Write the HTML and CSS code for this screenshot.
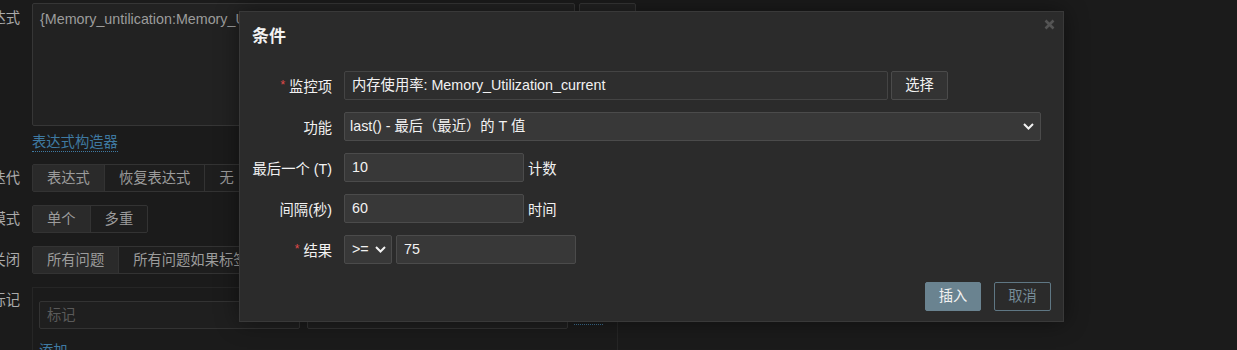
FILE: index.html
```html
<!DOCTYPE html>
<html lang="zh-CN">
<head>
<meta charset="utf-8">
<title>条件</title>
<link rel="stylesheet" href="styles.css">
</head>
<body>
<div class="page">
  <div class="frow">
    <div class="flabel flabel-expr"><span>表达式</span></div>
    <div class="fcontrol">
      <div class="expr-line">
        <div class="textarea">{Memory_untilication:Memory_Utilization_current.last(10,60)}&gt;=75</div>
        <div class="btn-bg">添加</div>
      </div>
      <a class="link link-builder">表达式构造器</a>
    </div>
  </div>
  <div class="frow frow-seg frow-first">
    <div class="flabel flabel-seg"><span>事件成功迭代</span></div>
    <div class="seg"><span class="on">表达式</span><span>恢复表达式</span><span>无</span></div>
  </div>
  <div class="frow frow-seg">
    <div class="flabel flabel-seg"><span>问题事件生成模式</span></div>
    <div class="seg"><span class="on">单个</span><span>多重</span></div>
  </div>
  <div class="frow frow-seg">
    <div class="flabel flabel-seg"><span>事件成功关闭</span></div>
    <div class="seg"><span class="on">所有问题</span><span>所有问题如果标签值匹配</span></div>
  </div>
  <div class="frow frow-seg">
    <div class="flabel flabel-tags"><span>匹配标记</span></div>
    <div class="tags">
      <div class="tag-row">
        <div class="tag-input placeholder">标记</div>
        <div class="tag-input"></div>
        <a class="link link-remove">移除</a>
      </div>
      <a class="link link-add">添加</a>
    </div>
  </div>
</div>

<div class="modal">
  <div class="modal-head">
    <h4 class="modal-title">条件</h4>
    <svg class="close" width="11" height="11" viewBox="0 0 11 11"><path d="M1.5 1.5 L9.5 9.5 M9.5 1.5 L1.5 9.5" stroke="#545454" stroke-width="2.6" fill="none"/></svg>
  </div>
  <div class="mform">
    <div class="mrow">
      <div class="mlabel req">监控项</div>
      <div class="mctrl gap3">
        <div class="minput ro w544">内存使用率: Memory_Utilization_current</div>
        <div class="mbtn">选择</div>
      </div>
    </div>
    <div class="mrow">
      <div class="mlabel">功能</div>
      <div class="mctrl">
        <div class="mselect w697"><span>last() - 最后（最近）的 T 值</span>
          <svg width="11" height="7" viewBox="0 0 11 7"><path d="M1 1 L5.5 5.5 L10 1" stroke="#f2f2f2" stroke-width="2" fill="none"/></svg>
        </div>
      </div>
    </div>
    <div class="mrow">
      <div class="mlabel">最后一个 (T)</div>
      <div class="mctrl gap4">
        <div class="minput w180">10</div>
        <span class="mnote">计数</span>
      </div>
    </div>
    <div class="mrow">
      <div class="mlabel">间隔(秒)</div>
      <div class="mctrl gap4">
        <div class="minput w180">60</div>
        <span class="mnote">时间</span>
      </div>
    </div>
    <div class="mrow">
      <div class="mlabel req">结果</div>
      <div class="mctrl gap4">
        <div class="mselect w48"><span>&gt;=</span>
          <svg width="11" height="7" viewBox="0 0 11 7"><path d="M1 1 L5.5 5.5 L10 1" stroke="#f2f2f2" stroke-width="2" fill="none"/></svg>
        </div>
        <div class="minput w180">75</div>
      </div>
    </div>
  </div>
  <div class="mfoot">
    <div class="fbtn primary">插入</div>
    <div class="fbtn alt">取消</div>
  </div>
</div>
</body>
</html>
```
FILE: styles.css
```css
* { box-sizing: border-box; }
html, body { margin: 0; padding: 0; }
body {
  width: 1237px;
  height: 350px;
  overflow: hidden;
  position: relative;
  background: #1b1b1b;
  font-family: "Liberation Sans", "Noto Sans CJK SC", sans-serif;
  font-size: 14.3px;
  color: #a8a8a8;
}

/* background form */
.page { padding-top: 3px; display: flex; flex-direction: column; }
.frow { display: flex; gap: 12px; align-items: flex-start; }
.frow-seg { margin-top: 13px; }
.frow-first { margin-top: 12px; }
.flabel {
  width: 20px;
  flex: none;
  display: flex;
  justify-content: flex-end;
  white-space: nowrap;
  color: #ababab;
}
.flabel-expr { padding-top: 5px; line-height: 20px; }
.flabel-seg { line-height: 28px; }
.flabel-tags { padding-top: 3px; line-height: 20px; }

.fcontrol { display: flex; flex-direction: column; align-items: flex-start; }
.expr-line { display: flex; gap: 4px; }
.textarea {
  width: 543px;
  height: 123px;
  border: 1px solid #363636;
  border-radius: 2px;
  background: #222222;
  padding: 6px 7px;
  line-height: 18px;
  color: #9c9c9c;
  white-space: nowrap;
  overflow: hidden;
}
.btn-bg {
  width: 57px;
  height: 28px;
  border: 1px solid #363636;
  border-radius: 2px;
  background: #222222;
  color: #9c9c9c;
  text-align: center;
  padding-top: 8px;
  line-height: 18px;
  overflow: hidden;
}
.link {
  display: inline-block;
  color: #3f7aa2;
  line-height: 18px;
  border-bottom: 1px dotted #3f7aa2;
}
.link-builder { margin-top: 7px; }

.seg {
  display: flex;
  height: 28px;
  border: 1px solid #333333;
  border-radius: 2px;
  background: #1e1e1e;
}
.seg span {
  padding: 0 14px;
  line-height: 26px;
  color: #9c9c9c;
  border-left: 1px solid #333333;
  white-space: nowrap;
}
.seg span:first-child { border-left: 0; }
.seg span.on { background: #2a2a2a; }

.tags {
  width: 586px;
  height: 90px;
  border: 1px solid #262626;
  padding: 13px 6px;
  display: flex;
  flex-direction: column;
  align-items: flex-start;
}
.tag-row { display: flex; align-items: center; gap: 7px; }
.tag-input {
  width: 261px;
  height: 28px;
  border: 1px solid #333333;
  border-radius: 2px;
  background: #1f1f1f;
  padding: 0 7px;
  line-height: 26px;
}
.tag-input.placeholder { color: #5a5a5a; }
.link-remove { margin-left: -1px; color: #3a6f93; border-bottom-color: #3a6f93; }
.link-add { margin-top: 13px; }

/* modal */
.modal {
  position: absolute;
  left: 239px;
  top: 11px;
  width: 825px;
  height: 311px;
  background: #2b2b2b;
  border: 1px solid #393939;
  box-shadow: 0 0 22px rgba(0, 0, 0, 0.45);
  color: #f2f2f2;
}
.modal-head { position: relative; padding: 13px 12px 0; }
.modal-title {
  margin: 0;
  font-size: 17px;
  font-weight: bold;
  line-height: 24px;
  color: #f2f2f2;
}
.close { position: absolute; top: 7px; right: 8px; }

.mform { margin-top: 22px; display: flex; flex-direction: column; gap: 12px; padding-left: 12px; }
.mrow { display: flex; align-items: center; gap: 12px; height: 29px; }
.mlabel { width: 80px; flex: none; text-align: right; white-space: nowrap; color: #f2f2f2; }
.mlabel.req::before {
  content: "*";
  color: #e04a4a;
  font-size: 12px;
  vertical-align: 3px;
  margin-right: 4px;
}
.mctrl { display: flex; align-items: center; }
.gap3 { gap: 3px; }
.gap4 { gap: 4px; }
.minput {
  height: 29px;
  border: 1px solid #4b4b4b;
  border-radius: 2px;
  background: #383838;
  padding: 0 7px;
  line-height: 27px;
  color: #f2f2f2;
  white-space: nowrap;
}
.minput.ro { background: #2e2e2e; border-color: #444444; }
.w544 { width: 544px; }
.w180 { width: 180px; }
.w697 { width: 697px; }
.w48 { width: 48px; }
.mbtn {
  width: 57px;
  height: 29px;
  border: 1px solid #4b4b4b;
  border-radius: 2px;
  background: #333333;
  text-align: center;
  line-height: 27px;
  color: #f2f2f2;
}
.mselect {
  height: 29px;
  border: 1px solid #4b4b4b;
  border-radius: 2px;
  background: #383838;
  padding: 0 6px 0 5px;
  display: flex;
  align-items: center;
  justify-content: space-between;
  line-height: 27px;
  color: #f2f2f2;
  white-space: nowrap;
}
.mselect.w48 { padding: 0 5px 0 7px; }
.mselect svg { flex: none; }
.mnote { color: #f2f2f2; }

.mfoot {
  margin-top: 18px;
  display: flex;
  justify-content: flex-end;
  gap: 13px;
  padding-right: 12px;
}
.fbtn {
  height: 29px;
  border-radius: 2px;
  text-align: center;
  line-height: 27px;
  border: 1px solid transparent;
}
.fbtn.primary { width: 56px; background: #6a8390; border-color: #6a8390; color: #f2f2f2; }
.fbtn.alt { width: 57px; background: transparent; border-color: #5f7784; color: #768c98; }
```
